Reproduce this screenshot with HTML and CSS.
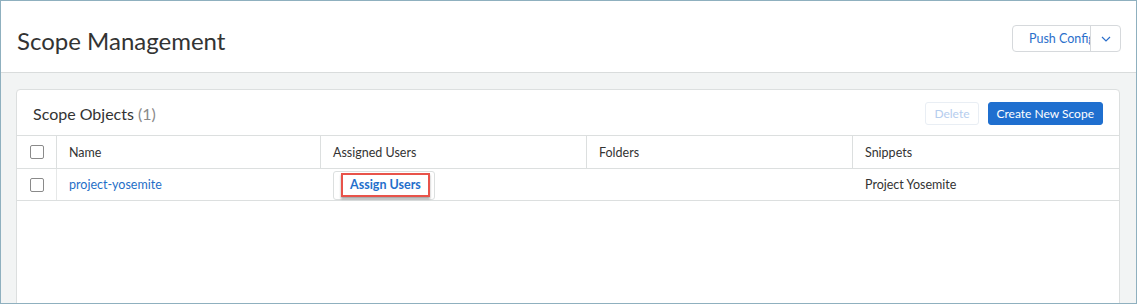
FILE: index.html
```html
<!DOCTYPE html>
<html lang="en">
<head>
  <meta charset="UTF-8" />
  <title>Scope Management</title>
  <link rel="stylesheet" href="styles.css">
</head>
<body>
  <div class="frame">

    <!-- Page header -->
    <div class="page-header">
      <h1>Scope Management</h1>
      <div class="push-btn">
        <span class="push-label">Push Config</span>
        <span class="push-caret">
          <svg width="10" height="6" viewBox="0 0 10 6"><polyline points="1,1 5,5 9,1" fill="none" stroke="#2b6fcb" stroke-width="1.2"/></svg>
        </span>
      </div>
    </div>

    <!-- Content -->
    <div class="content">
      <div class="card">
        <div class="card-header">
          <h2>Scope Objects <span class="count">(1)</span></h2>
          <div class="actions">
            <button class="btn btn-disabled">Delete</button>
            <button class="btn btn-primary">Create New Scope</button>
          </div>
        </div>

        <div class="grid-row head">
          <div class="cell check"><span class="checkbox"></span></div>
          <div class="cell">Name</div>
          <div class="cell">Assigned Users</div>
          <div class="cell">Folders</div>
          <div class="cell last">Snippets</div>
        </div>
        <div class="grid-row body">
          <div class="cell check"><span class="checkbox"></span></div>
          <div class="cell"><a href="#" class="link">project-yosemite</a></div>
          <div class="cell">
            <span class="assign-box"><span class="assign-mark">Assign Users</span></span>
          </div>
          <div class="cell"></div>
          <div class="cell last">Project Yosemite</div>
        </div>
      </div>
    </div>

  </div>
</body>
</html>
```

FILE: styles.css
```css
body {
  margin: 0;
  font-family: Lato, "Open Sans", sans-serif;
  color: #333;
}

.frame {
  height: 304px;
  box-sizing: border-box;
  border: 1px solid #8fb0bf;
  overflow: hidden;
  background: #f2f4f4;
}

/* Header */
.page-header {
  background: white;
  height: 71px;
  border-bottom: 1px solid #d9dcdc;
  display: flex;
  justify-content: space-between;
  align-items: flex-start;
  padding: 0 15px 0 16px;
}

.page-header h1 {
  font-size: 24px;
  font-weight: normal;
  line-height: 28px;
  margin: 26px 0 0 0;
  color: #333;
}

.push-btn {
  margin-top: 24px;
  height: 25px;
  display: flex;
  border: 1px solid #d6d9dc;
  border-radius: 4px;
  color: #2b6fcb;
  font-size: 12.5px;
}

.push-label {
  width: 61px;
  padding-left: 16px;
  overflow: hidden;
  white-space: nowrap;
  line-height: 25px;
  border-right: 1px solid #d6d9dc;
}

.push-caret {
  width: 29px;
  display: flex;
  align-items: center;
  justify-content: center;
}

.content {
  padding: 16px 16px 0 15px;
}

.card {
  background: white;
  border: 1px solid #dcdfdf;
  border-radius: 4px;
  height: 260px;
}

.card-header {
  height: 45px;
  display: flex;
  align-items: center;
  justify-content: space-between;
  padding: 0 16px;
}

.card-header h2 {
  font-size: 16px;
  font-weight: normal;
  line-height: 20px;
  margin: 0;
  padding-top: 2px;
}

.count {
  color: #8a8a8a;
}

.actions {
  display: flex;
  gap: 9px;
  padding-top: 1px;
}

.btn {
  font-family: Lato, sans-serif;
  font-size: 12px;
  height: 23px;
  border-radius: 3px;
  padding: 0 8px;
  white-space: nowrap;
  cursor: pointer;
}

.btn-disabled {
  background: white;
  border: 1px solid #e9eef4;
  color: #b5cdee;
}

.btn-primary {
  background: #1f6fcf;
  border: 1px solid #1f6fcf;
  color: white;
}

/* Table */
.grid-row {
  display: grid;
  grid-template-columns: 40px 264px 266px 266px 266px;
  border-bottom: 1px solid #dcdfdf;
  font-size: 12.5px;
}

.grid-row.head {
  border-top: 1px solid #dcdfdf;
  height: 32px;
}

.grid-row.body {
  height: 31px;
}

.cell {
  display: flex;
  align-items: center;
  padding-left: 12px;
  border-right: 1px solid #dcdfdf;
}

.head .cell.last {
  border-right: none;
}

.body .cell {
  border-right: none;
}

.body .cell.check {
  border-right: 1px solid #e6e8e8;
}

.cell.check {
  padding-left: 13px;
}

.checkbox {
  width: 12px;
  height: 12px;
  border: 1px solid #8a8a8a;
  border-radius: 2px;
  background: white;
}

.link {
  color: #1f6fc7;
  text-decoration: none;
}

.assign-box {
  align-self: flex-start;
  margin-top: 2px;
  height: 29px;
  width: 102px;
  border: 1px solid #dcdfdf;
  border-radius: 3px;
  display: flex;
  align-items: flex-start;
  padding-left: 7px;
  box-sizing: border-box;
  background: white;
}

.assign-mark {
  margin-top: 1px;
  border: 2px solid #e8534a;
  box-shadow: 0 2px 2px rgba(0, 0, 0, 0.35);
  padding: 2px 7px 3px 7px;
  color: #1f6fcc;
  font-weight: bold;
  font-size: 12.5px;
}
```
